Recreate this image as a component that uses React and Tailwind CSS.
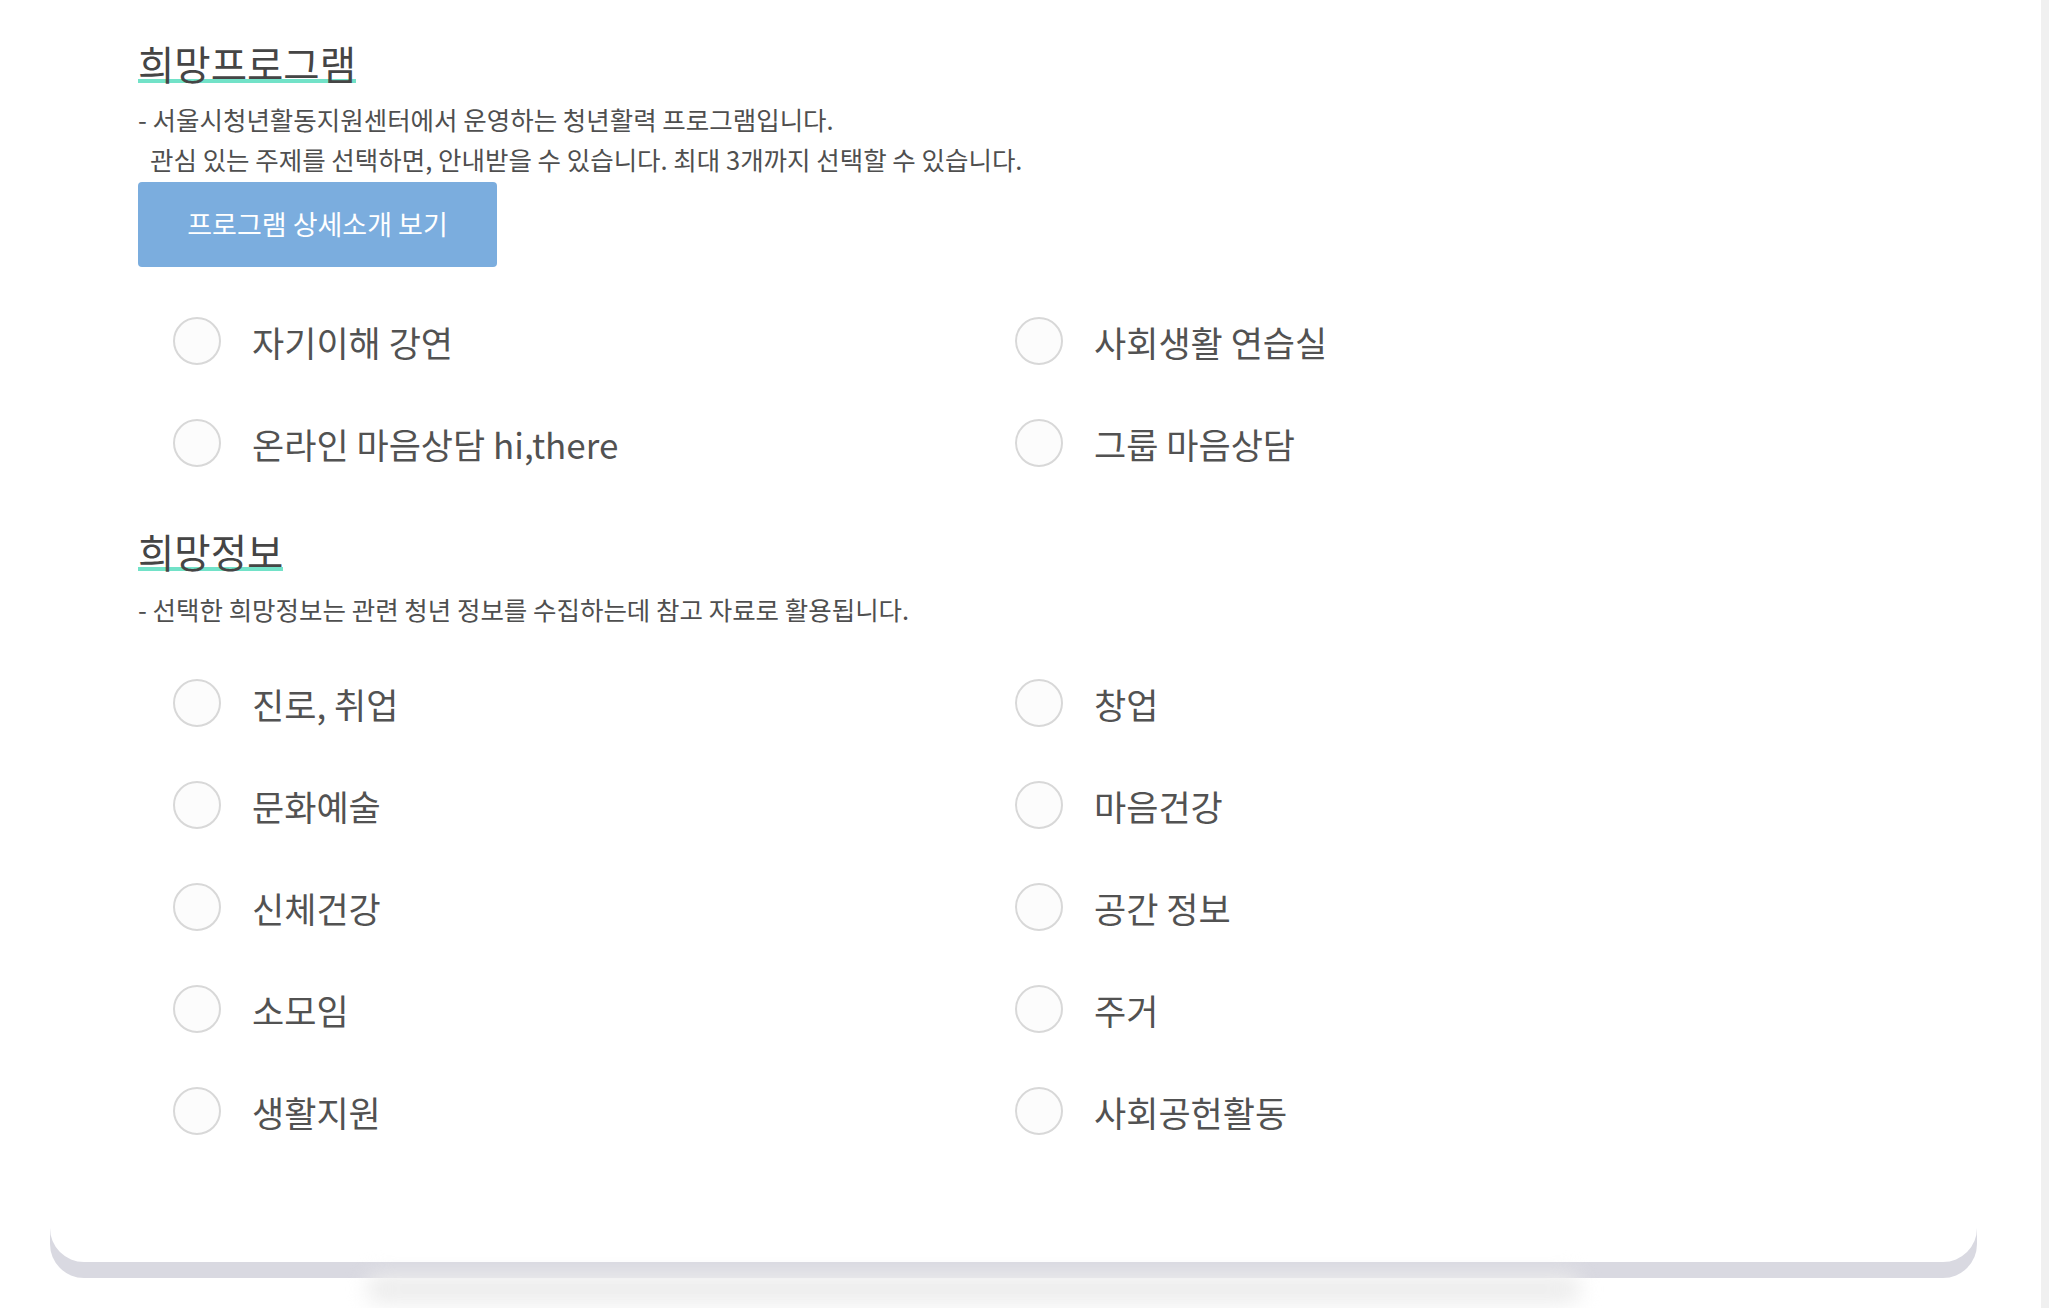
import React from 'react';

const programs = ['자기이해 강연', '사회생활 연습실', '온라인 마음상담 hi,there', '그룹 마음상담'];
const infos = ['진로, 취업', '창업', '문화예술', '마음건강', '신체건강', '공간 정보', '소모임', '주거', '생활지원', '사회공헌활동'];

const SectionTitle = ({ children }) => (
  <h2 className="h-[44px] leading-[44px] text-[39.5px] text-[#454545] font-normal">
    <span className="relative inline-block">
      <span className="absolute left-0 right-0 bottom-[2px] h-[4px] bg-[#72e2c8]" />
      <span className="relative">{children}</span>
    </span>
  </h2>
);

const Radio = ({ label }) => (
  <label className="h-[102px] flex items-center cursor-pointer">
    <span className="w-[48px] h-[48px] rounded-full border-2 border-[#d8d8d8] bg-[#fcfcfc] shrink-0" />
    <span className="ml-[31px] text-[35px] leading-none text-[#525252]">{label}</span>
  </label>
);

const RadioGrid = ({ items }) => (
  <div className="grid grid-cols-[842px_1fr] pl-[35px]">
    {items.map((item) => <Radio key={item} label={item} />)}
  </div>
);

export default function App() {
  return (
    <div className="h-[1308px] overflow-hidden bg-white flex" style={{ fontFamily: '"Noto Sans CJK KR", "Noto Sans", sans-serif' }}>
      <div className="flex-1">
        <div className="ml-[50px] w-[1927px] bg-white rounded-b-[34px] shadow-[0_16px_0_#d9d9e1] pl-[88px] pt-[41px] pb-[100px]">
          <SectionTitle>희망프로그램</SectionTitle>
          <div className="mt-[14px] text-[25.5px] leading-[40px] text-[#4f4f4f]">
            <p>- 서울시청년활동지원센터에서 운영하는 청년활력 프로그램입니다.</p>
            <p className="pl-[12px]">관심 있는 주제를 선택하면, 안내받을 수 있습니다. 최대 3개까지 선택할 수 있습니다.</p>
          </div>
          <button className="mt-[3px] w-[359px] h-[85px] rounded-[4px] bg-[#7badde] text-white text-[27px]">
            프로그램 상세소개 보기
          </button>
          <div className="mt-[23px]">
            <RadioGrid items={programs} />
          </div>

          <div className="mt-[35px]">
            <SectionTitle>희망정보</SectionTitle>
          </div>
          <p className="mt-[16px] text-[25.5px] leading-[40px] text-[#4f4f4f]">
            - 선택한 희망정보는 관련 청년 정보를 수집하는데 참고 자료로 활용됩니다.
          </p>
          <div className="mt-[23px]">
            <RadioGrid items={infos} />
          </div>
        </div>
        <div className="mt-[12px] ml-[366px] w-[1215px] h-[30px] bg-[#ededed] blur-[10px] rounded-full" />
      </div>
      <div className="w-[8px] bg-[#f0f0f0]" />
    </div>
  );
}
